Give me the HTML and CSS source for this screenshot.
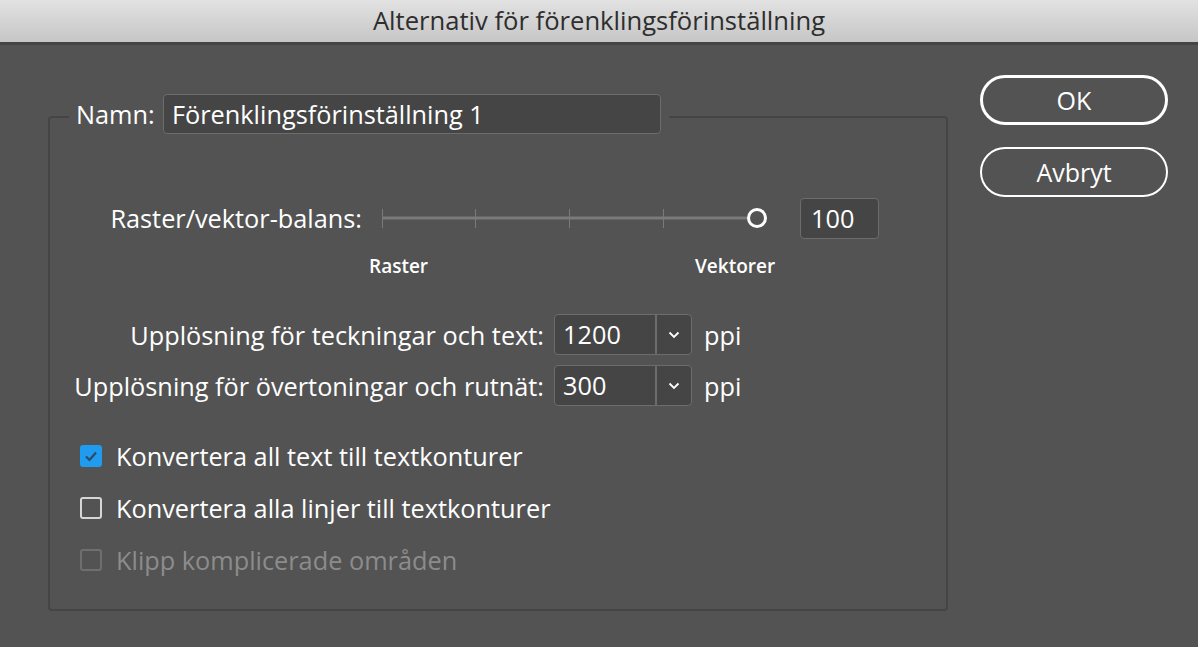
FILE: index.html
```html
<!DOCTYPE html>
<html lang="sv">
<head>
<meta charset="utf-8">
<title>Alternativ för förenklingsförinställning</title>
<link rel="stylesheet" href="styles.css">
</head>
<body>
<div class="titlebar">Alternativ för förenklingsförinställning</div>
<div class="main">
  <div class="group">
    <div class="legend">
      <span class="legend-label">Namn:</span>
      <div class="name-input">Förenklingsförinställning 1</div>
    </div>
    <div class="slider-row">
      <span class="slider-label">Raster/vektor-balans:</span>
      <svg class="slider" width="398" height="30" viewBox="0 0 398 30">
        <line x1="0" y1="15" x2="366" y2="15" stroke="#7a7a7a" stroke-width="3"/>
        <line x1="0.5" y1="6" x2="0.5" y2="25" stroke="#7a7a7a" stroke-width="1"/>
        <line x1="93.5" y1="6" x2="93.5" y2="25" stroke="#7a7a7a" stroke-width="1"/>
        <line x1="187.5" y1="6" x2="187.5" y2="25" stroke="#7a7a7a" stroke-width="1"/>
        <line x1="281.5" y1="6" x2="281.5" y2="25" stroke="#7a7a7a" stroke-width="1"/>
        <circle cx="375" cy="15" r="8.5" fill="none" stroke="#ffffff" stroke-width="3"/>
      </svg>
      <div class="num-input">100</div>
    </div>
    <div class="scale-labels">
      <span class="scale-raster">Raster</span>
      <span class="scale-vektor">Vektorer</span>
    </div>
    <div class="res-row first">
      <span class="res-label">Upplösning för teckningar och text:</span>
      <div class="combo">
        <span class="combo-value">1200</span>
        <span class="combo-btn"><svg width="12" height="8" viewBox="0 0 12 8"><polyline points="1.5,1.5 6,6 10.5,1.5" fill="none" stroke="#fff" stroke-width="1.8"/></svg></span>
      </div>
      <span class="unit">ppi</span>
    </div>
    <div class="res-row">
      <span class="res-label">Upplösning för övertoningar och rutnät:</span>
      <div class="combo">
        <span class="combo-value">300</span>
        <span class="combo-btn"><svg width="12" height="8" viewBox="0 0 12 8"><polyline points="1.5,1.5 6,6 10.5,1.5" fill="none" stroke="#fff" stroke-width="1.8"/></svg></span>
      </div>
      <span class="unit">ppi</span>
    </div>
    <div class="checks">
      <div class="check-row">
        <span class="box checked"><svg width="14" height="12" viewBox="0 0 14 12"><polyline points="2,6.5 5.5,10 12,2.5" fill="none" stroke="#2e4a66" stroke-width="2.2"/></svg></span>
        <span class="check-text">Konvertera all text till textkonturer</span>
      </div>
      <div class="check-row">
        <span class="box"></span>
        <span class="check-text">Konvertera alla linjer till textkonturer</span>
      </div>
      <div class="check-row disabled">
        <span class="box"></span>
        <span class="check-text">Klipp komplicerade områden</span>
      </div>
    </div>
  </div>
  <div class="buttons">
    <div class="btn default">OK</div>
    <div class="btn">Avbryt</div>
  </div>
</div>
</body>
</html>
```
FILE: styles.css
```css
html, body {
  margin: 0;
  padding: 0;
}
body {
  width: 1198px;
  height: 647px;
  overflow: hidden;
  background: #535353;
  font-family: "Open Sans", "Noto Sans", sans-serif;
  font-size: 25.3px;
  font-weight: 400;
  color: #ffffff;
}
.titlebar {
  box-sizing: border-box;
  height: 45px;
  padding-bottom: 3px;
  line-height: 42px;
  text-align: center;
  font-size: 25.6px;
  font-weight: 400;
  color: #2e2e2e;
  background: linear-gradient(#e2e2e2, #c6c6c6);
  border-bottom: 3px solid #444444;
}
.main {
  display: flex;
  align-items: flex-start;
}
.group {
  position: relative;
  margin-left: 48px;
  margin-top: 71px;
  width: 900px;
  height: 495px;
  box-sizing: border-box;
  border: 2px solid #454545;
  border-radius: 4px;
}
.legend {
  position: absolute;
  left: 19px;
  top: -24px;
  width: 600px;
  height: 40px;
  background: #535353;
  display: flex;
  align-items: center;
  box-sizing: border-box;
  padding-left: 7px;
}
.legend-label {
  width: 87px;
  line-height: 30px;
  white-space: nowrap;
}
.name-input {
  width: 498px;
  height: 40px;
  box-sizing: border-box;
  background: #454545;
  border: 1px solid #6c6c6c;
  border-radius: 4px;
  line-height: 38px;
  padding-left: 8px;
  white-space: nowrap;
}
.slider-row {
  display: flex;
  align-items: center;
  margin-top: 78px;
  height: 44px;
  line-height: 30px;
}
.slider-label {
  width: 312px;
  text-align: right;
  white-space: nowrap;
}
.slider {
  margin-left: 20px;
  display: block;
}
.num-input {
  margin-left: 20px;
  width: 79px;
  height: 41px;
  box-sizing: border-box;
  background: #454545;
  border: 1px solid #6c6c6c;
  border-radius: 4px;
  line-height: 39px;
  padding-left: 10px;
}
.scale-labels {
  position: relative;
  height: 40px;
  margin-top: 8px;
  font-size: 19px;
  font-weight: 600;
  line-height: 26px;
}
.scale-raster, .scale-vektor {
  position: absolute;
  top: 5px;
}
.scale-raster { left: 319px; }
.scale-vektor { left: 645px; }
.res-row {
  display: flex;
  align-items: center;
  height: 41px;
  margin-top: 10px;
  line-height: 30px;
}
.res-row.first {
  margin-top: 26px;
}
.res-label {
  width: 494px;
  text-align: right;
  white-space: nowrap;
}
.combo {
  margin-left: 10px;
  width: 138px;
  height: 41px;
  box-sizing: border-box;
  background: #454545;
  border: 1px solid #6c6c6c;
  border-radius: 4px;
  display: flex;
}
.combo-value {
  flex: 1;
  line-height: 39px;
  padding-left: 8px;
}
.combo-btn {
  width: 34px;
  border-left: 2px solid #6c6c6c;
  display: flex;
  align-items: center;
  justify-content: center;
}
.unit {
  margin-left: 12px;
}
.checks {
  margin-top: 39px;
  padding-left: 30px;
  display: flex;
  flex-direction: column;
  gap: 30px;
}
.check-row {
  display: flex;
  align-items: center;
  height: 22px;
  line-height: 30px;
}
.box {
  width: 22px;
  height: 22px;
  box-sizing: border-box;
  border: 2px solid #d6d6d6;
  border-radius: 3px;
  display: flex;
  align-items: center;
  justify-content: center;
}
.box.checked {
  background: #1f9bf0;
  border-color: #1f9bf0;
}
.check-text {
  margin-left: 14px;
  white-space: nowrap;
}
.check-row.disabled .box {
  border-color: #6f6f6f;
}
.check-row.disabled .check-text {
  color: #8c8c8c;
}
.buttons {
  margin-left: 32px;
  margin-top: 30px;
  display: flex;
  flex-direction: column;
  gap: 22px;
}
.btn {
  width: 188px;
  height: 50px;
  box-sizing: border-box;
  border: 2px solid #ffffff;
  border-radius: 25px;
  text-align: center;
  font-size: 25px;
  line-height: 46px;
}
.btn.default {
  border-width: 3px;
  line-height: 44px;
}
```
